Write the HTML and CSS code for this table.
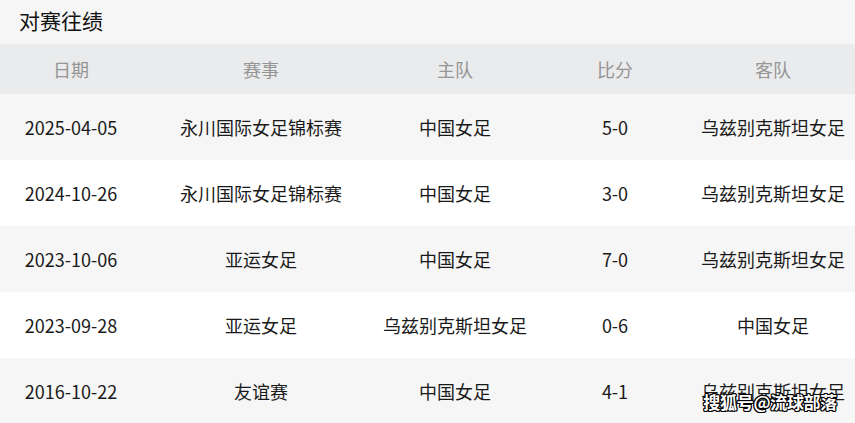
FILE: index.html
```html
<!DOCTYPE html>
<html lang="zh-CN">
<head>
<meta charset="utf-8">
<title>对赛往绩</title>
<link rel="stylesheet" href="styles.css">
</head>
<body>
<div class="panel">
  <div class="title">对赛往绩</div>
  <div class="table">
    <div class="row head">
      <div class="cell">日期</div>
      <div class="cell">赛事</div>
      <div class="cell">主队</div>
      <div class="cell">比分</div>
      <div class="cell">客队</div>
    </div>
    <div class="row odd">
      <div class="cell">2025-04-05</div>
      <div class="cell">永川国际女足锦标赛</div>
      <div class="cell">中国女足</div>
      <div class="cell">5-0</div>
      <div class="cell">乌兹别克斯坦女足</div>
    </div>
    <div class="row">
      <div class="cell">2024-10-26</div>
      <div class="cell">永川国际女足锦标赛</div>
      <div class="cell">中国女足</div>
      <div class="cell">3-0</div>
      <div class="cell">乌兹别克斯坦女足</div>
    </div>
    <div class="row odd">
      <div class="cell">2023-10-06</div>
      <div class="cell">亚运女足</div>
      <div class="cell">中国女足</div>
      <div class="cell">7-0</div>
      <div class="cell">乌兹别克斯坦女足</div>
    </div>
    <div class="row">
      <div class="cell">2023-09-28</div>
      <div class="cell">亚运女足</div>
      <div class="cell">乌兹别克斯坦女足</div>
      <div class="cell">0-6</div>
      <div class="cell">中国女足</div>
    </div>
    <div class="row odd">
      <div class="cell">2016-10-22</div>
      <div class="cell">友谊赛</div>
      <div class="cell">中国女足</div>
      <div class="cell">4-1</div>
      <div class="cell">乌兹别克斯坦女足</div>
    </div>
  </div>
  <div class="watermark">搜狐号@流球部落</div>
</div>
</body>
</html>
```
FILE: styles.css
```css
html, body {
  margin: 0;
  padding: 0;
  background: #ffffff;
}
body {
  font-family: "Noto Sans CJK SC", "Noto Sans", sans-serif;
  color: #1a1a1a;
  overflow: hidden;
}
.panel {
  position: relative;
  width: 855px;
  height: 423px;
  overflow: hidden;
}
.title {
  height: 44px;
  background: #f6f6f6;
  padding-left: 19px;
  font-size: 21px;
  line-height: 40px;
  color: #111;
}
.row {
  display: grid;
  grid-template-columns: 142px 238px 150px 170px 146px;
  height: 66px;
  align-items: center;
  font-size: 18px;
}
.row.odd {
  background: #f6f6f6;
}
.row.head {
  height: 50px;
  background: #eaebec;
  color: #959595;
}
.cell {
  text-align: center;
  white-space: nowrap;
}
.watermark {
  position: absolute;
  right: 18px;
  bottom: 9px;
  font-size: 17px;
  font-weight: bold;
  color: #ffffff;
  letter-spacing: -0.3px;
  text-shadow: 1px 1px 0 #000, -1px -1px 0 #000, 1px -1px 0 #000, -1px 1px 0 #000, 0 1px 0 #000, 1px 0 0 #000, 0 -1px 0 #000, -1px 0 0 #000;
}
```
